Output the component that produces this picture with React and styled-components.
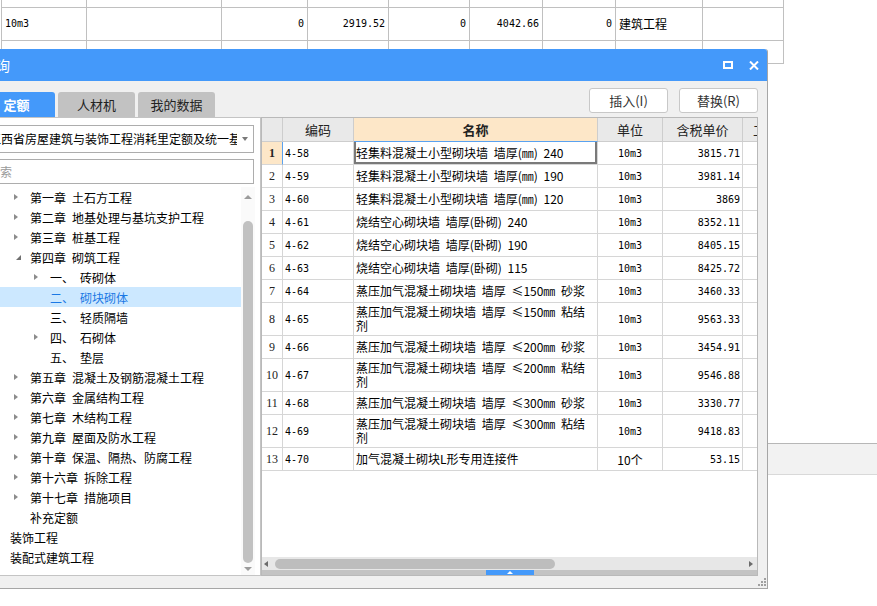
import React from 'react';
import styled, { createGlobalStyle } from 'styled-components';

const GlobalStyle = createGlobalStyle`
  html, body {
    margin: 0;
    padding: 0;
    background: #fff;
  }
  body {
    font-family: "Noto Sans CJK SC", "Liberation Sans", sans-serif;
    font-size: 12px;
    color: #000;
  }
  * {
    box-sizing: border-box;
  }
`;

const BLUE = '#4499fa';
const PEACH = '#fde7c8';
const MONO = '"DejaVu Sans Mono", "Liberation Mono", monospace';

// ---------- background sheet ----------
const Page = styled.div`
  position: relative;
  width: 877px;
  height: 606px;
  overflow: hidden;
  background: #fff;
`;

const Sheet = styled.div`
  width: 784px;
  height: 64px;
  overflow: hidden;
  border-bottom: 1px solid #c0c0c0;
`;

const SheetGrid = styled.div`
  display: grid;
  grid-template-columns: 85px 135px 86px 81px 81px 73px 73px 87px 81px;
  margin: -25px 0 0 1px;
  border-left: 1px solid #c0c0c0;
`;

const SheetCell = styled.div`
  height: 33px;
  line-height: 32px;
  padding: 0 3px;
  border-right: 1px solid #c0c0c0;
  border-bottom: 1px solid #c0c0c0;
  text-align: ${(p) => (p.$right ? 'right' : 'left')};
  font-family: ${(p) => (p.$cjk ? '"Noto Sans CJK SC", sans-serif' : MONO)};
  font-size: ${(p) => (p.$cjk ? '12px' : '10px')};
  white-space: nowrap;
  overflow: hidden;
`;

const StatusBand = styled.div`
  margin-top: 379px;
  height: 32px;
  background: #f2f2f2;
  border-top: 1px solid #b7b7b7;
  border-bottom: 1px solid #d9d9d9;
`;

// ---------- dialog ----------
const Dialog = styled.div`
  position: absolute;
  left: -31px;
  top: 49px;
  width: 799px;
  height: 540px;
  display: flex;
  flex-direction: column;
  background: #f0f0f0;
  border: 1px solid #a6a6a6;
  border-top: none;
  border-radius: 3px 3px 0 0;
`;

const TitleBar = styled.div`
  height: 32px;
  flex: none;
  display: flex;
  align-items: center;
  padding: 0 8px 0 12px;
  background: ${BLUE};
  color: #fff;
  font-size: 14px;
  border-radius: 3px 3px 0 0;
`;

const WinControls = styled.div`
  margin-left: auto;
  display: flex;
  align-items: center;
  gap: 16px;
`;

const Body = styled.div`
  flex: 1;
  display: flex;
  flex-direction: column;
  padding: 0 9px 12px 8px;
`;

const TopRow = styled.div`
  height: 36px;
  flex: none;
  display: flex;
  justify-content: space-between;
`;

const Tabs = styled.div`
  align-self: flex-end;
  display: flex;
  gap: 3px;
`;

const Tab = styled.div`
  width: 77px;
  height: 25px;
  line-height: 25px;
  text-align: center;
  font-size: 13px;
  border-radius: 3px 3px 0 0;
  background: ${(p) => (p.$active ? BLUE : '#c2c2c2')};
  color: ${(p) => (p.$active ? '#fff' : '#222')};
  font-weight: ${(p) => (p.$active ? 700 : 400)};
`;

const Actions = styled.div`
  display: flex;
  gap: 11px;
  padding-top: 7px;
`;

const ActionButton = styled.button`
  width: 79px;
  height: 25px;
  padding: 0;
  background: #fff;
  border: 1px solid #c8c8c8;
  border-radius: 3px;
  font-family: "Noto Sans CJK SC", sans-serif;
  font-size: 13px;
  color: #333;
`;

const Main = styled.div`
  height: 459px;
  flex: none;
  display: flex;
`;

// ---------- left tree panel ----------
const LeftPanel = styled.div`
  width: 283px;
  display: flex;
  flex-direction: column;
  padding-top: 7px;
  background: #fff;
  border: 1px solid #c4c4c4;
`;

const Combo = styled.div`
  height: 28px;
  margin: 0 6px 0 5px;
  display: flex;
  align-items: center;
  border: 1px solid #adadad;
`;

const ComboText = styled.div`
  flex: 1;
  overflow: hidden;
  white-space: nowrap;
  padding-left: 4px;
  line-height: 26px;
`;

const ComboArrow = styled.div`
  width: 16px;
  display: flex;
  justify-content: center;
  &::after {
    content: '';
    border-top: 4px solid #7a7a7a;
    border-left: 3px solid transparent;
    border-right: 3px solid transparent;
  }
`;

const SearchBox = styled.div`
  height: 25px;
  margin: 6px 6px 0 5px;
  padding-left: 3px;
  border: 1px solid #adadad;
  line-height: 23px;
  color: #9a9a9a;
  white-space: nowrap;
`;

const Tree = styled.div`
  flex: 1;
  min-height: 0;
  margin-top: 3px;
  display: flex;
  padding-right: 5px;
`;

const TreeList = styled.div`
  flex: 1;
  overflow: hidden;
`;

const TreeRow = styled.div`
  height: 20px;
  display: flex;
  align-items: center;
  padding-left: ${(p) => 11 + p.$level * 20}px;
  background: ${(p) => (p.$selected ? '#cce8ff' : 'transparent')};
  color: ${(p) => (p.$selected ? '#1a78e4' : '#000')};
  white-space: nowrap;
`;

const Toggle = styled.span`
  width: 20px;
  height: 20px;
  flex: none;
  display: flex;
  align-items: center;
  padding-left: ${(p) => (p.$state === 'open' ? 6 : 4)}px;
  &::before {
    content: '';
    display: ${(p) => (p.$state ? 'block' : 'none')};
    width: 0;
    height: 0;
    border-left: ${(p) => (p.$state === 'open' ? '5px solid transparent' : '4px solid #8c8c8c')};
    border-bottom: ${(p) => (p.$state === 'open' ? '5px solid #707070' : '3.5px solid transparent')};
    border-top: ${(p) => (p.$state === 'open' ? '0' : '3.5px solid transparent')};
  }
`;

const TreeName = styled.span`
  margin-left: 6px;
`;

const VScroll = styled.div`
  width: 14px;
  display: flex;
  flex-direction: column;
  align-items: center;
  background: #fafafa;
`;

const ScrollArrow = styled.div`
  height: ${(p) => p.$h}px;
  flex: none;
  display: flex;
  align-items: center;
  justify-content: center;
  &::after {
    content: '';
    border-left: 4px solid transparent;
    border-right: 4px solid transparent;
    ${(p) => (p.$down ? 'border-top: 4px solid #9b9b9b;' : 'border-bottom: 4px solid #9b9b9b;')}
  }
`;

const VThumb = styled.div`
  flex: 1;
  width: 10px;
  margin-top: 14px;
  background: #c1c1c1;
  border-radius: 5px;
`;

// ---------- right table panel ----------
const RightPanel = styled.div`
  width: 497px;
  display: flex;
  flex-direction: column;
  background: #fff;
  border: 1px solid #b9b9b9;
`;

const GridArea = styled.div`
  flex: 1;
  min-height: 0;
  overflow: hidden;
`;

const TableRow = styled.div`
  display: flex;
  height: ${(p) => p.$h}px;
`;

const Cell = styled.div`
  flex: none;
  width: ${(p) => p.$w}px;
  display: flex;
  align-items: center;
  justify-content: ${(p) => p.$align || 'flex-start'};
  padding: 0 2px;
  border-right: 1px solid #d6d6d6;
  border-bottom: 1px solid #d6d6d6;
  white-space: nowrap;
  overflow: hidden;
  font-family: ${(p) => (p.$mono ? MONO : '"Noto Sans CJK SC", sans-serif')};
  font-size: ${(p) => (p.$mono ? '10px' : '12px')};
`;

const HeadCell = styled(Cell)`
  background: ${(p) => (p.$hl ? PEACH : '#e9e9e9')};
  border-color: #cdcdcd;
  border-bottom-color: ${(p) => (p.$hl ? '#5aa2f0' : '#cdcdcd')};
  font-size: 13px;
  font-weight: ${(p) => (p.$hl ? 700 : 400)};
  color: #222;
  overflow: visible;
`;

const NumCell = styled(Cell)`
  background: ${(p) => (p.$hl ? PEACH : '#fff')};
  border-right-color: ${(p) => (p.$hl ? '#5aa2f0' : '#d6d6d6')};
  font-weight: ${(p) => (p.$hl ? 700 : 400)};
  font-family: "Liberation Serif", "Noto Sans CJK SC", serif;
  font-size: 12px;
  color: #222;
`;

const NameCell = styled(Cell)`
  flex-direction: column;
  align-items: flex-start;
  justify-content: center;
  word-spacing: 3px;
  box-shadow: ${(p) =>
    p.$sel ? 'inset 2px 0 #7a7a7a, inset -2px 0 #7a7a7a, inset 0 -2px #7a7a7a' : 'none'};
`;

const NameLine = styled.span`
  display: block;
  height: 14px;
  line-height: 14px;
`;

const HScroll = styled.div`
  height: 13px;
  flex: none;
  display: flex;
  align-items: center;
  padding: 0 4px 0 2px;
  background: #e7e7e7;
`;

const HArrow = styled.span`
  width: 0;
  height: 0;
  border-top: 3.5px solid transparent;
  border-bottom: 3.5px solid transparent;
  ${(p) => (p.$right ? 'border-left: 4px solid #6b6b6b; margin-left: auto;' : 'border-right: 4px solid #6b6b6b;')}
`;

const HThumb = styled.div`
  width: 280px;
  height: 10px;
  margin-left: 7px;
  background: #bdbdbd;
  border-radius: 5px;
`;

const HandleBar = styled.div`
  height: 5px;
  flex: none;
  display: flex;
  justify-content: center;
  background: #c3c3c3;
`;

const Handle = styled.div`
  width: 48px;
  display: flex;
  align-items: center;
  justify-content: center;
  background: ${BLUE};
  &::after {
    content: '';
    border-left: 3px solid transparent;
    border-right: 3px solid transparent;
    border-bottom: 3px solid #fff;
  }
`;

const Grip = styled.svg`
  position: absolute;
  right: 1px;
  bottom: 2px;
`;

// ---------- data ----------
const sheetRows = [
  ['', '', '', '', '', '', '', '', ''],
  ['10m3', '', '0', '2919.52', '0', '4042.66', '0', '建筑工程', ''],
  ['', '', '0', '0', '0', '0', '0', '', ''],
];
const sheetRight = [false, false, true, true, true, true, true, false, false];

const tree = [
  { level: 1, state: 'closed', pre: '第一章', name: '土石方工程' },
  { level: 1, state: 'closed', pre: '第二章', name: '地基处理与基坑支护工程' },
  { level: 1, state: 'closed', pre: '第三章', name: '桩基工程' },
  { level: 1, state: 'open', pre: '第四章', name: '砌筑工程' },
  { level: 2, state: 'closed', pre: '一、', name: '砖砌体' },
  { level: 2, pre: '二、', name: '砌块砌体', selected: true },
  { level: 2, pre: '三、', name: '轻质隔墙' },
  { level: 2, state: 'closed', pre: '四、', name: '石砌体' },
  { level: 2, pre: '五、', name: '垫层' },
  { level: 1, state: 'closed', pre: '第五章', name: '混凝土及钢筋混凝土工程' },
  { level: 1, state: 'closed', pre: '第六章', name: '金属结构工程' },
  { level: 1, state: 'closed', pre: '第七章', name: '木结构工程' },
  { level: 1, state: 'closed', pre: '第九章', name: '屋面及防水工程' },
  { level: 1, state: 'closed', pre: '第十章', name: '保温、隔热、防腐工程' },
  { level: 1, state: 'closed', pre: '第十六章', name: '拆除工程' },
  { level: 1, state: 'closed', pre: '第十七章', name: '措施项目' },
  { level: 1, pre: '补充定额' },
  { level: 0, pre: '装饰工程' },
  { level: 0, pre: '装配式建筑工程' },
];

const cols = [21, 71, 244, 65, 80, 60];

const rows = [
  { code: '4-58', name: ['轻集料混凝土小型砌块墙 墙厚(㎜) 240'], unit: '10m3', price: '3815.71' },
  { code: '4-59', name: ['轻集料混凝土小型砌块墙 墙厚(㎜) 190'], unit: '10m3', price: '3981.14' },
  { code: '4-60', name: ['轻集料混凝土小型砌块墙 墙厚(㎜) 120'], unit: '10m3', price: '3869' },
  { code: '4-61', name: ['烧结空心砌块墙 墙厚(卧砌) 240'], unit: '10m3', price: '8352.11' },
  { code: '4-62', name: ['烧结空心砌块墙 墙厚(卧砌) 190'], unit: '10m3', price: '8405.15' },
  { code: '4-63', name: ['烧结空心砌块墙 墙厚(卧砌) 115'], unit: '10m3', price: '8425.72' },
  { code: '4-64', name: ['蒸压加气混凝土砌块墙 墙厚 ≤150㎜ 砂浆'], unit: '10m3', price: '3460.33' },
  { code: '4-65', name: ['蒸压加气混凝土砌块墙 墙厚 ≤150㎜ 粘结', '剂'], unit: '10m3', price: '9563.33' },
  { code: '4-66', name: ['蒸压加气混凝土砌块墙 墙厚 ≤200㎜ 砂浆'], unit: '10m3', price: '3454.91' },
  { code: '4-67', name: ['蒸压加气混凝土砌块墙 墙厚 ≤200㎜ 粘结', '剂'], unit: '10m3', price: '9546.88' },
  { code: '4-68', name: ['蒸压加气混凝土砌块墙 墙厚 ≤300㎜ 砂浆'], unit: '10m3', price: '3330.77' },
  { code: '4-69', name: ['蒸压加气混凝土砌块墙 墙厚 ≤300㎜ 粘结', '剂'], unit: '10m3', price: '9418.83' },
  { code: '4-70', name: ['加气混凝土砌块L形专用连接件'], unit: '10个', price: '53.15' },
];

function MaxIcon() {
  return (
    <svg width="10" height="8" viewBox="0 0 10 8">
      <rect x="1" y="1" width="8" height="6" fill="none" stroke="#fff" strokeWidth="2" />
    </svg>
  );
}

function CloseIcon() {
  return (
    <svg width="10" height="9" viewBox="0 0 10 9">
      <path d="M1 0.5 L9 8.5 M9 0.5 L1 8.5" stroke="#fff" strokeWidth="2" />
    </svg>
  );
}

export default function App() {
  return (
    <Page>
      <GlobalStyle />

      <Sheet>
        <SheetGrid>
          {sheetRows.map((r, ri) =>
            r.map((v, ci) => (
              <SheetCell key={`${ri}-${ci}`} $right={sheetRight[ci]} $cjk={ci === 7}>
                {v}
              </SheetCell>
            ))
          )}
        </SheetGrid>
      </Sheet>
      <StatusBand />

      <Dialog>
        <TitleBar>
          查询
          <WinControls>
            <MaxIcon />
            <CloseIcon />
          </WinControls>
        </TitleBar>

        <Body>
          <TopRow>
            <Tabs>
              <Tab $active>定额</Tab>
              <Tab>人材机</Tab>
              <Tab>我的数据</Tab>
            </Tabs>
            <Actions>
              <ActionButton>插入(I)</ActionButton>
              <ActionButton>替换(R)</ActionButton>
            </Actions>
          </TopRow>

          <Main>
            <LeftPanel>
              <Combo>
                <ComboText>江西省房屋建筑与装饰工程消耗里定额及统一基价表</ComboText>
                <ComboArrow />
              </Combo>
              <SearchBox>搜索</SearchBox>
              <Tree>
                <TreeList>
                  {tree.map((t, i) => (
                    <TreeRow key={i} $level={t.level} $selected={t.selected}>
                      <Toggle $state={t.state} />
                      <span>{t.pre}</span>
                      {t.name && <TreeName>{t.name}</TreeName>}
                    </TreeRow>
                  ))}
                </TreeList>
                <VScroll>
                  <ScrollArrow $h={20} />
                  <VThumb />
                  <ScrollArrow $h={12} $down />
                </VScroll>
              </Tree>
            </LeftPanel>

            <RightPanel>
              <GridArea>
                <TableRow $h={24}>
                  <HeadCell $w={cols[0]} />
                  <HeadCell $w={cols[1]} $align="center">编码</HeadCell>
                  <HeadCell $w={cols[2]} $align="center" $hl>名称</HeadCell>
                  <HeadCell $w={cols[3]} $align="center">单位</HeadCell>
                  <HeadCell $w={cols[4]} $align="center">含税单价</HeadCell>
                  <HeadCell $w={cols[5]} $align="center">工程量</HeadCell>
                </TableRow>
                {rows.map((r, i) => (
                  <TableRow key={r.code} $h={r.name.length > 1 ? 33 : 23}>
                    <NumCell $w={cols[0]} $align="center" $hl={i === 0}>{i + 1}</NumCell>
                    <Cell $w={cols[1]} $mono>{r.code}</Cell>
                    <NameCell $w={cols[2]} $sel={i === 0}>
                      {r.name.map((line) => (
                        <NameLine key={line}>{line}</NameLine>
                      ))}
                    </NameCell>
                    <Cell $w={cols[3]} $align="center" $mono={r.unit === '10m3'}>{r.unit}</Cell>
                    <Cell $w={cols[4]} $align="flex-end" $mono>{r.price}</Cell>
                    <Cell $w={cols[5]} />
                  </TableRow>
                ))}
              </GridArea>
              <HScroll>
                <HArrow />
                <HThumb />
                <HArrow $right />
              </HScroll>
              <HandleBar>
                <Handle />
              </HandleBar>
            </RightPanel>
          </Main>
        </Body>

        <Grip width="9" height="9" viewBox="0 0 9 9">
          <rect x="7" y="1" width="2" height="2" fill="#a0a0a0" />
          <rect x="4" y="4" width="2" height="2" fill="#a0a0a0" />
          <rect x="7" y="4" width="2" height="2" fill="#a0a0a0" />
          <rect x="1" y="7" width="2" height="2" fill="#a0a0a0" />
          <rect x="4" y="7" width="2" height="2" fill="#a0a0a0" />
          <rect x="7" y="7" width="2" height="2" fill="#a0a0a0" />
        </Grip>
      </Dialog>
    </Page>
  );
}
